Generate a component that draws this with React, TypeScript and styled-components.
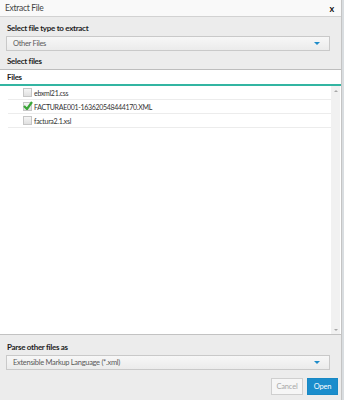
import React from 'react';
import styled, { createGlobalStyle } from 'styled-components';

const GlobalStyle = createGlobalStyle`
    html, body {
        margin: 0;
        padding: 0;
        background: #dedede;
    }
    body {
        font-family: Lato, "Open Sans", sans-serif;
        font-size: 8px;
        color: #333;
        letter-spacing: -0.3px;
    }
`;

const Screen = styled.div`
    width: 344px;
    height: 400px;
    display: flex;
    background: #d9dde0;
`;

const Dialog = styled.div`
    width: 341px;
    height: 400px;
    display: flex;
    flex-direction: column;
    background: #ececec;
    border-right: 1px solid #c4c4c4;
`;

const Header = styled.div`
    height: 16px;
    flex: none;
    display: flex;
    align-items: center;
    justify-content: space-between;
    padding: 0 7px 0 5px;
    background: #f9f9f9;
    border-bottom: 1px solid #d2d2d2;
    font-size: 8.5px;
    color: #444;
`;

const Close = styled.span`
    font-weight: 700;
    font-size: 9px;
    color: #111;
`;

const Section = styled.div`
    padding: ${({ $top }: { $top: number }) => $top}px 11px 0 6px;
    display: flex;
    flex-direction: column;
`;

const Label = styled.div`
    font-weight: 700;
    font-size: 8px;
    color: #1e1e1e;
    height: 12px;
    line-height: 12px;
    padding-left: 1px;
`;

const Select = styled.div`
    margin-top: 2px;
    height: 13px;
    display: flex;
    align-items: center;
    justify-content: space-between;
    padding: 0 9px 0 6px;
    border: 1px solid #c9c9c9;
    background: linear-gradient(#f7f7f7, #ebebeb);
    color: #5a5a5a;
    font-size: 7.5px;
`;

const Caret = styled.span`
    width: 0;
    height: 0;
    border-left: 3.5px solid transparent;
    border-right: 3.5px solid transparent;
    border-top: 3.5px solid #1f8cc9;
`;

const SubTitle = styled.div`
    padding: 4px 7px 0;
    height: 14px;
    line-height: 12px;
    font-weight: 700;
    font-size: 8px;
    color: #1e1e1e;
    border-bottom: 1px solid #bdbdbd;
`;

const Panel = styled.div`
    flex: 1;
    display: flex;
    flex-direction: column;
    background: #fff;
    border-bottom: 1px solid #c2c2c2;
    min-height: 0;
`;

const PanelHead = styled.div`
    height: 14px;
    line-height: 15px;
    padding-left: 7px;
    font-weight: 700;
    font-size: 8px;
    color: #1e1e1e;
    border-bottom: 2px solid #33b5a2;
`;

const PanelBody = styled.div`
    flex: 1;
    display: flex;
`;

const List = styled.div`
    flex: 1;
    padding-left: 8px;
`;

const Row = styled.div`
    height: 13px;
    display: flex;
    align-items: center;
    padding-left: 15px;
    border-bottom: 1px solid #ececec;
    font-size: 7px;
    color: #333;
`;

const Box = styled.span`
    width: 7px;
    height: 7px;
    margin-right: 2px;
    flex: none;
    position: relative;
    border: 1px solid #c6c6c6;
    background: linear-gradient(#f5f5f5, #e0e0e0);
`;

const Check = styled.svg`
    position: absolute;
    left: -1px;
    top: -2px;
`;

const Scrollbar = styled.div`
    width: 9px;
    margin-right: 1px;
    display: flex;
    flex-direction: column;
    justify-content: space-between;
    align-items: center;
    background: #f1f1f1;
    padding: 4px 0 3px;
`;

const Arrow = styled.span`
    width: 0;
    height: 0;
    border-left: 2.5px solid transparent;
    border-right: 2.5px solid transparent;
    ${({ $up }: { $up?: boolean }) =>
        $up ? 'border-bottom: 2.5px solid #a8a8a8;' : 'border-top: 2.5px solid #a8a8a8;'}
`;

const Footer = styled.div`
    display: flex;
    justify-content: flex-end;
    gap: 4px;
    padding: 8px 3px 5px 0;
`;

const Button = styled.button`
    height: 17px;
    padding: 0;
    width: ${({ $w }: { $w: number; $primary?: boolean }) => $w}px;
    font-family: Lato, "Open Sans", sans-serif;
    font-size: 7.5px;
    letter-spacing: -0.2px;
    border: 1px solid ${({ $primary }) => ($primary ? '#1888c4' : '#cfcfcf')};
    background: ${({ $primary }) => ($primary ? '#1b8dcc' : '#f6f6f6')};
    color: ${({ $primary }) => ($primary ? '#fff' : '#a8a8a8')};
`;

const files = [
    { name: 'ebxml21.css', checked: false },
    { name: 'FACTURAE001-163620548444170.XML', checked: true },
    { name: 'factura2.1.xsl', checked: false },
];

export default function App() {
    return (
        <>
            <GlobalStyle />
            <Screen>
                <Dialog>
                    <Header>
                        Extract File
                        <Close>x</Close>
                    </Header>
                    <Section $top={5}>
                        <Label>Select file type to extract</Label>
                        <Select>
                            Other Files
                            <Caret />
                        </Select>
                    </Section>
                    <SubTitle>Select files</SubTitle>
                    <Panel>
                        <PanelHead>Files</PanelHead>
                        <PanelBody>
                            <List>
                                {files.map((f) => (
                                    <Row key={f.name}>
                                        <Box>
                                            {f.checked && (
                                                <Check width="10" height="9" viewBox="0 0 10 9">
                                                    <path d="M1 5 L4 8 L9 1" fill="none" stroke="#3aa637" strokeWidth="2.2" />
                                                </Check>
                                            )}
                                        </Box>
                                        {f.name}
                                    </Row>
                                ))}
                            </List>
                            <Scrollbar>
                                <Arrow $up />
                                <Arrow />
                            </Scrollbar>
                        </PanelBody>
                    </Panel>
                    <Section $top={6}>
                        <Label>Parse other files as</Label>
                        <Select>
                            Extensible Markup Language (*.xml)
                            <Caret />
                        </Select>
                    </Section>
                    <Footer>
                        <Button $w={32}>Cancel</Button>
                        <Button $w={31} $primary>
                            Open
                        </Button>
                    </Footer>
                </Dialog>
            </Screen>
        </>
    );
}
